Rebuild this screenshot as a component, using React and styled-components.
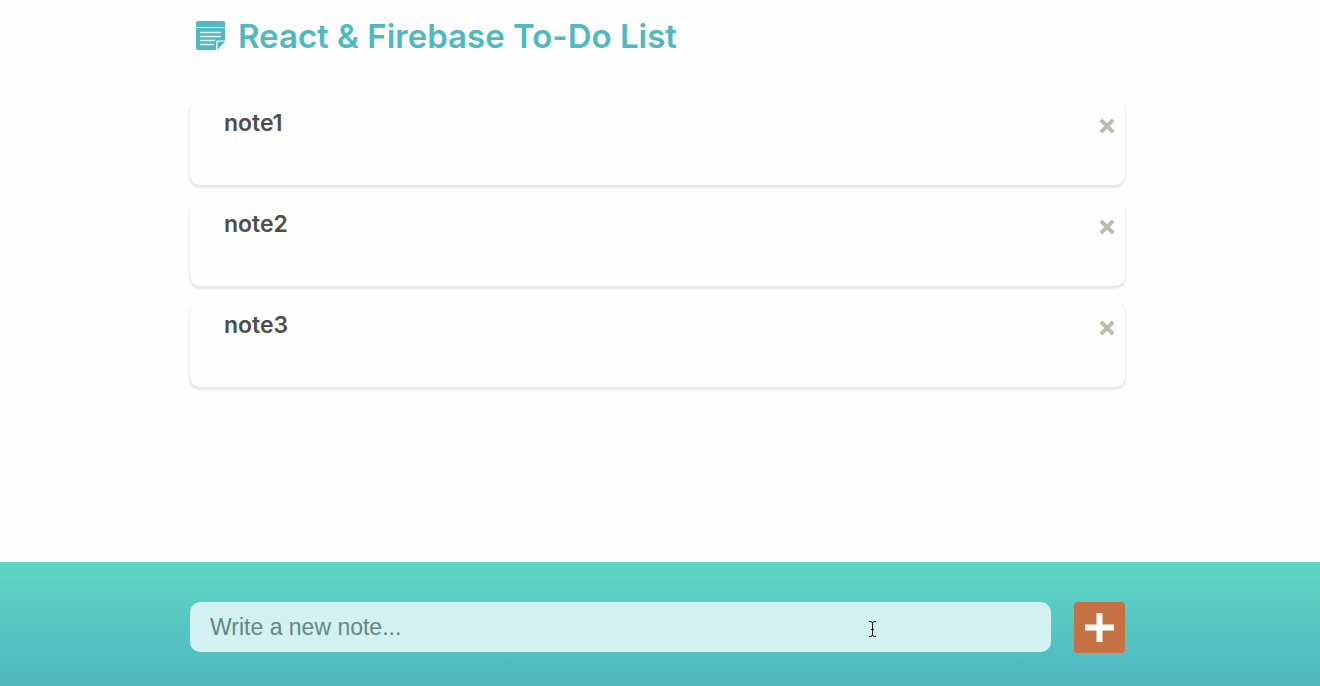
import React, { useState } from "react";
import styled, { createGlobalStyle } from "styled-components";

const GlobalStyle = createGlobalStyle`
  *, *::before, *::after { box-sizing: border-box; }
  html, body { margin: 0; background: #fefefe; }
  body { font-family: Inter, "Open Sans", sans-serif; color: #4d4d4d; }
`;

const Page = styled.div`
  min-height: 100vh;
  display: flex;
  flex-direction: column;
`;

const Header = styled.header`
  display: flex;
  align-items: center;
  gap: 12px;
  height: 72px;
  padding: 0 196px;
  color: #4eb9c1;
`;

const Title = styled.h1`
  margin: 0;
  font-size: 33px;
  line-height: 38px;
  font-weight: 600;
  white-space: nowrap;
`;

const NoteIcon = styled.svg`
  width: 30px;
  height: 30px;
  flex: none;
`;

const NoteList = styled.ul`
  flex: 1;
  display: flex;
  flex-direction: column;
  gap: 16px;
  list-style: none;
  margin: 0;
  padding: 28px 195px 24px 190px;
`;

const NoteCard = styled.li`
  display: flex;
  justify-content: space-between;
  align-items: flex-start;
  min-height: 85px;
  padding: 8px 8px 8px 34px;
  border-radius: 10px;
  background: #fefefe;
  box-shadow: 0 2px 2px 1px rgba(0, 0, 0, 0.09);
`;

const NoteText = styled.p`
  margin: 0;
  font-size: 23px;
  line-height: 30px;
  font-weight: 600;
`;

const RemoveButton = styled.button`
  display: grid;
  place-items: center;
  width: 20px;
  height: 36px;
  padding: 0;
  border: 0;
  background: transparent;
  color: #b9bcab;
  cursor: pointer;
`;

const Footer = styled.form`
  display: flex;
  align-items: flex-start;
  gap: 23px;
  min-height: 124px;
  padding: 40px 195px 32px 190px;
  background: linear-gradient(#5dd3c3 12%, #4fb7c0);
`;

const Field = styled.div`
  position: relative;
  flex: 1;
  display: flex;
`;

const NoteInput = styled.input`
  width: 100%;
  height: 50px;
  padding: 0 20px;
  border: 0;
  border-radius: 10px;
  outline: none;
  background: #d2f1f0;
  color: #4d6b6b;
  font-family: "Liberation Sans", Arial, sans-serif;
  font-size: 23px;
  &::placeholder { color: #648787; opacity: 1; }
`;

const Pointer = styled.svg`
  position: absolute;
  left: 678px;
  top: 19px;
  width: 9px;
  height: 17px;
  pointer-events: none;
`;

const AddButton = styled.button`
  display: grid;
  place-items: center;
  width: 51px;
  height: 51px;
  padding: 0;
  border: 0;
  border-radius: 4px;
  background: #c57142;
  color: #fff;
  cursor: pointer;
`;

export default function App() {
  const [notes, setNotes] = useState(["note1", "note2", "note3"]);
  const [draft, setDraft] = useState("");

  const addNote = (event) => {
    event.preventDefault();
    if (!draft.trim()) return;
    setNotes([...notes, draft.trim()]);
    setDraft("");
  };

  return (
    <Page>
      <GlobalStyle />
      <Header>
        <NoteIcon viewBox="0 0 30 30" aria-hidden="true">
          <path fill="currentColor" d="M2 0h25a2 2 0 0 1 2 2v4H0V2a2 2 0 0 1 2-2z" />
          <path fill="currentColor" opacity="0.3" d="M0 6h29v1H0z" />
          <path fill="currentColor" d="M0 7h29v12.500H22q-2 0-2 2V29H2a2 2 0 0 1-2-2z" />
          <path fill="currentColor" d="M21.500 29V22q0-1.500 1.500-1.500h6z" />
          <path stroke="#fefefe" strokeWidth="1.500" opacity="0.85" d="M4 11.500h21M4 15.500h21M4 19.500h15M4 23.500h14" />
        </NoteIcon>
        <Title>React &amp; Firebase To-Do List</Title>
      </Header>
      <NoteList>
        {notes.map((note, index) => (
          <NoteCard key={index}>
            <NoteText>{note}</NoteText>
            <RemoveButton
              type="button"
              aria-label={`Delete ${note}`}
              onClick={() => setNotes(notes.filter((_, i) => i !== index))}
            >
              <svg width="16" height="16" viewBox="0 0 16 16" aria-hidden="true">
                <path stroke="currentColor" strokeWidth="3.800" strokeLinecap="square" strokeLinejoin="round" d="M3.200 3.200l9.600 9.600M12.800 3.200L3.200 12.800" />
              </svg>
            </RemoveButton>
          </NoteCard>
        ))}
      </NoteList>
      <Footer onSubmit={addNote}>
        <Field>
          <NoteInput
            type="text"
            aria-label="New note"
            placeholder="Write a new note..."
            value={draft}
            onChange={(event) => setDraft(event.target.value)}
          />
          <Pointer viewBox="0 0 9 17" aria-hidden="true">
            <path fill="none" stroke="#111" strokeWidth="1" d="M1 .5h1.500q2 0 2 2v11q0 2-2 2H1M8 .5H6.500q-2 0-2 2M4.500 13.500q0 2 2 2H8M3 8.500h3" />
          </Pointer>
        </Field>
        <AddButton type="submit" aria-label="Add note">
          <svg width="29" height="29" viewBox="0 0 29 29" aria-hidden="true">
            <path fill="currentColor" d="M11.500 0h6v11.500H29v6H17.500V29h-6V17.500H0v-6h11.500z" />
          </svg>
        </AddButton>
      </Footer>
    </Page>
  );
}
